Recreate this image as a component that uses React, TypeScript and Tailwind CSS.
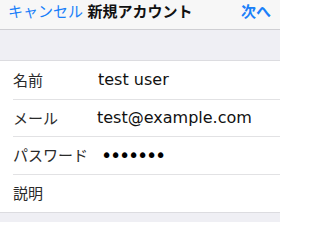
const jp = { fontFamily: '"Noto Sans CJK JP", "Noto Sans", sans-serif' };

const rows = [
  { label: '名前', value: 'test user', h: 'h-[39px]', w: 'w-[85px]' },
  { label: 'メール', value: 'test@example.com', h: 'h-[37px]', w: 'w-[84px]' },
  { label: 'パスワード', value: '•••••••', h: 'h-[38px]', w: 'w-[88px]', secret: true },
  { label: '説明', value: '', h: 'h-[37px]', w: 'w-[85px]', last: true },
];

export default function App() {
  return (
    <div className="w-[280px] h-[222px] bg-[#efeff4] overflow-hidden" style={jp}>
      {/* Nav bar */}
      <div className="h-[30px] bg-[#f7f7f7] border-b border-[#cfcfd3] grid grid-cols-[1fr_auto_1fr] items-start px-2 pt-[1px] text-[15px] leading-[20px]">
        <span className="text-[#1a7ff9]">キャンセル</span>
        <span className="font-bold text-[#111]">新規アカウント</span>
        <span className="text-right font-bold text-[#1a7ff9] pr-[1px]">次へ</span>
      </div>

      {/* Spacer band */}
      <div className="h-[31px] border-b border-[#dcdce0]" />

      {/* Form rows */}
      <div className="bg-white border-b border-[#dcdce0] pl-[13px]">
        {rows.map((r) => (
          <div
            key={r.label}
            className={`${r.h} flex items-center ${r.last ? '' : 'border-b border-[#e2e2e4]'}`}
          >
            <span className={`${r.w} shrink-0 text-[15px] text-[#2a2a2a]`}>{r.label}</span>
            {r.value && (
              <span
                className={
                  r.secret
                    ? 'text-[19px] leading-none text-black tracking-[-2.2px]'
                    : 'text-[16px] text-[#111]'
                }
                style={{ fontFamily: '"DejaVu Sans", sans-serif' }}
              >
                {r.value}
              </span>
            )}
          </div>
        ))}
      </div>
    </div>
  );
}
